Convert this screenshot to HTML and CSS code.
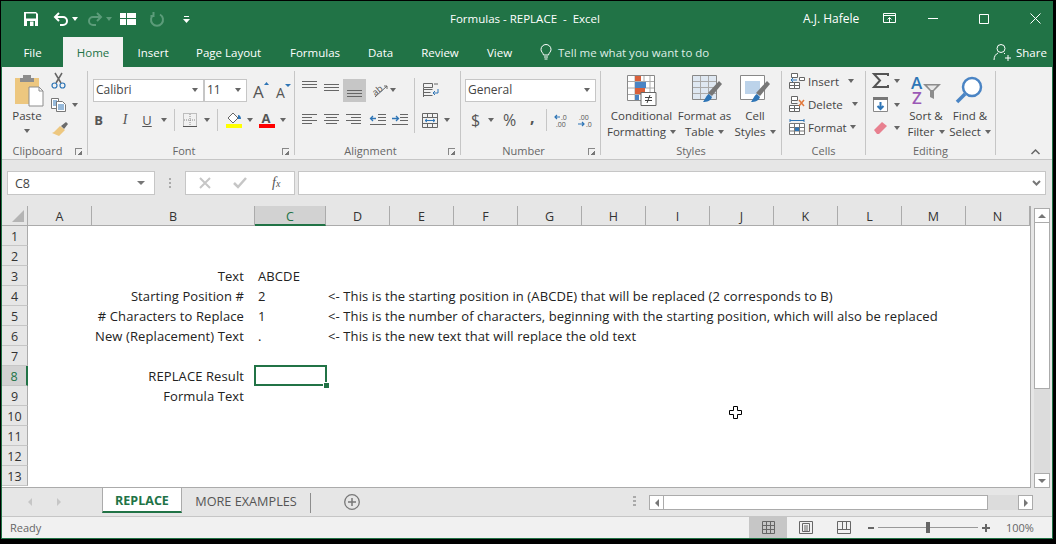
FILE: index.html
```html
<!DOCTYPE html>
<html lang="en">
<head>
    <meta charset="UTF-8">
    <title>Formulas - REPLACE - Excel</title>
    <link rel="stylesheet" href="styles.css">
</head>
<body>
<div class="window">

    <!-- title bar -->
    <div class="titlebar">
        <div class="qat">
            <svg width="14" height="14" viewBox="0 0 14 14"><path d="M0 0h12l2 2v12H0z" fill="#fff"/><path d="M2 1.500h10v5H2z" fill="#217346"/><path d="M3 9h8v5H3z" fill="#217346"/><path d="M6 9.500h3.500V14H6z" fill="#fff"/></svg>
            <svg class="undo" width="16" height="14" viewBox="0 0 16 14"><path d="M6 1L2 5l4 4M2 5h8a4 4 0 0 1 0 8H7" fill="none" stroke="#fff" stroke-width="2"/></svg>
            <span class="caret white undo-caret"></span>
            <svg class="redo" width="16" height="14" viewBox="0 0 16 14"><path d="M10 1l4 4-4 4M14 5H6a4 4 0 0 0 0 8h3" fill="none" stroke="#5c9c7a" stroke-width="2"/></svg>
            <span class="caret dim redo-caret"></span>
            <svg class="form" width="16" height="12" viewBox="0 0 16 12"><path d="M0 0h6v5H0zM7 0h9v5H7zM0 6h6v6H0zM7 6h9v6H7z" fill="#fff"/></svg>
            <svg class="refresh" width="14" height="14" viewBox="0 0 14 14"><path d="M4 2.500a6 6 0 1 0 6 0M3.500 0v4h-3" fill="none" stroke="#5c9c7a" stroke-width="2"/></svg>
            <svg class="custom" width="7" height="7" viewBox="0 0 7 7"><path d="M1 0h5v1H1zM0 3h7L3.500 7z" fill="#fff"/></svg>
        </div>
        <div class="doc-title">Formulas - REPLACE &nbsp;-&nbsp; Excel</div>
        <div class="user">A.J. Hafele</div>
        <div class="winbtns">
            <svg width="14" height="11" viewBox="0 0 14 11"><path d="M.5.500h12v9H.5zM1 2.500h11M6.500 9V4.500M4.500 6.500l2-2 2 2" fill="none" stroke="#fff"/></svg>
            <svg class="min" width="10" height="1" viewBox="0 0 10 1"><path d="M0 0h10v1H0z" fill="#fff"/></svg>
            <svg class="max" width="10" height="10" viewBox="0 0 10 10"><path d="M.5.500h9v9h-9z" fill="none" stroke="#fff"/></svg>
            <svg class="close" width="11" height="11" viewBox="0 0 11 11"><path d="M.5.500l10 10M10.500.500l-10 10" stroke="#fff" fill="none"/></svg>
        </div>
    </div>

    <!-- tabs -->
    <div class="tabs">
        <span class="tab file">File</span>
        <span class="tab active">Home</span>
        <span class="tab insert">Insert</span>
        <span class="tab layout">Page Layout</span>
        <span class="tab formulas">Formulas</span>
        <span class="tab data">Data</span>
        <span class="tab review">Review</span>
        <span class="tab view">View</span>
        <svg class="bulb" width="12" height="16" viewBox="0 0 12 16"><path d="M3.500 11C3 8.500 1 8 1 5.500a5 5 0 0 1 10 0C11 8 9 8.500 8.500 11zM4 13h4M4.500 15h3" fill="none" stroke="#fff"/></svg>
        <span class="tell">Tell me what you want to do</span>
        <svg class="share-icon" width="18" height="18" viewBox="0 0 18 18"><circle cx="8" cy="5.500" r="4" fill="none" stroke="#fff"/><path d="M1 17c0-4 2-6 4-7M11 10l1 1M12 15h6M15 12v6" fill="none" stroke="#fff"/></svg>
        <span class="share">Share</span>
    </div>

    <!-- ribbon -->
    <div class="ribbon">
        <section class="group g-clipboard">
            <div class="group-body">
                <div class="big paste-btn">
                    <svg width="29" height="32" viewBox="0 0 29 32"><path d="M0 3h24v26H0z" fill="#edc77f"/><path d="M8 0h8v3h3v4H5V3h3z" fill="#8d8d8d"/><path d="M14 12h10l4 4v15H14z" fill="#fff" stroke="#8d8d8d"/><path d="M24 12v4h4" fill="none" stroke="#8d8d8d"/></svg>
                    <span class="big-text">Paste</span>
                    <span class="caret"></span>
                </div>
                <div class="clip-tools">
                    <svg width="15" height="16" viewBox="0 0 15 16"><path d="M4 0l6 10M11 0L5 10" stroke="#666" stroke-width="1.500" fill="none"/><circle cx="3.500" cy="12.500" r="2.500" fill="none" stroke="#2e75b6" stroke-width="1.200"/><circle cx="11.500" cy="12.500" r="2.500" fill="none" stroke="#2e75b6" stroke-width="1.200"/></svg>
                    <div class="tool-row">
                        <svg width="16" height="14" viewBox="0 0 16 14"><path d="M.5.500h7v10h-7z" fill="#fff" stroke="#777"/><path d="M5.500 3.500h6l3 3v7h-9z" fill="#fff" stroke="#777"/><path d="M7 7h6M7 9h6M7 11h6M2 3h4M2 5h3M2 7h3" stroke="#2e75b6"/></svg>
                        <span class="caret copy-caret"></span>
                    </div>
                    <svg width="17" height="15" viewBox="0 0 17 15"><path d="M10 5l5-4 2 2-4 5z" fill="#6b6b6b"/><path d="M9 5l5 4-6 6-7-3 2-1z" fill="#edc77f"/></svg>
                </div>
            </div>
            <div class="group-label launched">Clipboard<span class="launcher"></span></div>
        </section>

        <section class="group g-font">
            <div class="group-body stack">
                <div class="row-top">
                    <div class="select font-name">Calibri<span class="caret"></span></div>
                    <div class="select font-size">11<span class="caret"></span></div>
                    <svg class="grow" width="17" height="17" viewBox="0 0 17 17"><path d="M11 3l2.500-3L16 3z" fill="#2e75b6"/><text x="0" y="16" class="glyph" font-size="17">A</text></svg>
                    <svg class="shrink" width="15" height="15" viewBox="0 0 15 15"><path d="M9 0h6l-3 3z" fill="#2e75b6"/><text x="0" y="14" class="glyph" font-size="14">A</text></svg>
                </div>
                <div class="row-bottom">
                    <span class="fmt b">B</span>
                    <span class="fmt i">I</span>
                    <span class="fmt u">U</span>
                    <span class="caret u-caret"></span>
                    <span class="vsep first"></span>
                    <svg class="borders" width="14" height="14" viewBox="0 0 14 14"><path d="M.5.500h13v13H.5zM7 1v12M1 7h12" fill="none" stroke="#888" stroke-dasharray="1 1"/><path d="M0 13.500h14" stroke="#555"/></svg>
                    <span class="caret border-caret"></span>
                    <span class="vsep second"></span>
                    <svg class="fill" width="16" height="16" viewBox="0 0 16 16"><path d="M2 6l5-5 5 5-5 5z" fill="#fff" stroke="#666"/><path d="M12 3c2 0 3 2 3 4h-3z" fill="#2e75b6"/><path d="M0 12h16v4H0z" fill="#ffff00"/></svg>
                    <span class="caret fill-caret"></span>
                    <svg class="color" width="16" height="16" viewBox="0 0 16 16"><text x="2.500" y="11" class="glyph" font-size="13" font-weight="700">A</text><path d="M0 12h16v4H0z" fill="#ff0000"/></svg>
                    <span class="caret color-caret"></span>
                </div>
            </div>
            <div class="group-label launched">Font<span class="launcher"></span></div>
        </section>

        <section class="group g-align">
            <div class="group-body stack">
                <div class="row-top">
                    <svg class="lines" width="15" height="11" viewBox="0 0 15 11"><path d="M0 .5h15M0 3.500h15M0 6.500h15" stroke="#666"/></svg>
                    <svg class="lines" width="15" height="11" viewBox="0 0 15 11"><path d="M0 3.500h15M0 6.500h15M0 9.500h15" stroke="#666"/></svg>
                    <span class="lines-on"><svg width="15" height="11" viewBox="0 0 15 11"><path d="M0 4.500h15M0 7.500h15M0 10.500h15" stroke="#666"/></svg></span>
                    <svg class="orient" width="16" height="16" viewBox="0 0 16 16"><text x="0" y="11" class="glyph" font-size="9" transform="rotate(-40 6 8)">ab</text><path d="M3 15L15 4M15 4h-3M15 4v3" fill="none" stroke="#666"/></svg>
                    <span class="caret orient-caret"></span>
                    <span class="vsep tall"></span>
                    <svg class="wrap" width="16" height="15" viewBox="0 0 16 15"><path d="M.5.500h9v4h-9zM.5 6.500h9M.5 9.500h7M.5 12.500h9M.5 5v9M11 1h4" fill="none" stroke="#666"/><path d="M15 6v4h-5M12 8l-2 2 2 2" fill="none" stroke="#2e75b6"/></svg>
                </div>
                <div class="row-bottom">
                    <svg class="al" width="15" height="12" viewBox="0 0 15 12"><path d="M0 .5h15M0 3.500h10M0 6.500h15M0 9.500h10" stroke="#666"/></svg>
                    <svg class="al" width="15" height="12" viewBox="0 0 15 12"><path d="M0 .5h15M2 3.500h11M0 6.500h15M2 9.500h11" stroke="#666"/></svg>
                    <svg class="al" width="15" height="12" viewBox="0 0 15 12"><path d="M0 .5h15M5 3.500h10M0 6.500h15M5 9.500h10" stroke="#666"/></svg>
                    <svg class="indent" width="16" height="12" viewBox="0 0 16 12"><path d="M8 .5h8M8 3.500h8M8 6.500h8M0 10.500h16" stroke="#666"/><path d="M6 4.500H1M3 2L.5 4.500 3 7" fill="none" stroke="#2e75b6" stroke-width="1.300"/></svg>
                    <svg class="indent" width="16" height="12" viewBox="0 0 16 12"><path d="M8 .5h8M8 3.500h8M8 6.500h8M0 10.500h16" stroke="#666"/><path d="M0 4.500h6M4 2l2.500 2.500L4 7" fill="none" stroke="#2e75b6" stroke-width="1.300"/></svg>
                    <svg class="merge" width="16" height="15" viewBox="0 0 16 15"><path d="M.5.500h15v14H.5zM1 4.500h14M1 10.500h14M5.500 1v3M10.500 1v3M5.500 11v3M10.500 11v3" fill="none" stroke="#666"/><path d="M3 7.500h10M5 6L3 7.500 5 9M11 6l2 1.500L11 9" fill="none" stroke="#2e75b6"/></svg>
                    <span class="caret merge-caret"></span>
                </div>
            </div>
            <div class="group-label launched">Alignment<span class="launcher"></span></div>
        </section>

        <section class="group g-number">
            <div class="group-body stack">
                <div class="row-top">
                    <div class="select number-format">General<span class="caret"></span></div>
                </div>
                <div class="row-bottom">
                    <span class="num-sym dollar">$</span>
                    <span class="caret dollar-caret"></span>
                    <span class="num-sym percent">%</span>
                    <span class="num-sym comma">,</span>
                    <span class="vsep"></span>
                    <svg class="dec" width="15" height="13" viewBox="0 0 15 13"><text x="6" y="6" class="dec-text">.0</text><text x="1" y="13" class="dec-text">.00</text><path d="M5 3H0M2 1L0 3l2 2" fill="none" stroke="#2e75b6" stroke-width="1.200"/></svg>
                    <svg class="dec second" width="15" height="13" viewBox="0 0 15 13"><text x="2" y="6" class="dec-text">.00</text><text x="9" y="13" class="dec-text">.0</text><path d="M1 10h6M5 8l2 2-2 2" fill="none" stroke="#2e75b6" stroke-width="1.200"/></svg>
                </div>
            </div>
            <div class="group-label launched">Number<span class="launcher"></span></div>
        </section>

        <section class="group g-styles">
            <div class="group-body">
                <div class="big style-btn">
                    <svg width="30" height="31" viewBox="0 0 30 31"><path d="M.5.500h27v25H.5z" fill="#fff" stroke="#888"/><path d="M8 1v24M17 1v24M23 1v24M1 6.500h26M1 13h26M1 19.500h26" stroke="#aaa" fill="none"/><path d="M8 1h6v5H8zM8 13h10v6H8z" fill="#d9603b"/><path d="M8 7h11v6H8zM8 20h4v5H8z" fill="#4a84c4"/><path d="M14 17.500h15v13H14z" fill="#fff" stroke="#666"/><path d="M18 22.500h7M18 25.500h7M23 20l-3 8" stroke="#444" fill="none"/></svg>
                    <span class="big-text">Conditional</span>
                    <span class="big-text">Formatting<span class="caret inline"></span></span>
                </div>
                <div class="big style-btn">
                    <svg width="30" height="31" viewBox="0 0 30 31"><path d="M.5.500h24v24H.5z" fill="#dfe8f2" stroke="#888"/><path d="M1 6.500h23M1 12.500h23M1 18.500h23M8.500 1v23M16.500 1v23" stroke="#aaa" fill="none"/><path d="M27 6l3 3-10 12-4-3z" fill="#777"/><path d="M17 19l3 3c-1 4-5 5-9 5 2-2 3-7 6-8z" fill="#2e75b6"/></svg>
                    <span class="big-text">Format as</span>
                    <span class="big-text">Table<span class="caret inline"></span></span>
                </div>
                <div class="big style-btn">
                    <svg width="30" height="31" viewBox="0 0 30 31"><path d="M.5.500h24v24H.5z" fill="#fff" stroke="#888"/><path d="M5 6h15v13H5z" fill="#bcd3ea"/><path d="M27 6l3 3-10 12-4-3z" fill="#777"/><path d="M17 19l3 3c-1 4-5 5-9 5 2-2 3-7 6-8z" fill="#2e75b6"/></svg>
                    <span class="big-text">Cell</span>
                    <span class="big-text">Styles<span class="caret inline"></span></span>
                </div>
            </div>
            <div class="group-label">Styles</div>
        </section>

        <section class="group g-cells">
            <div class="group-body cell-list">
                <div class="cell-cmd">
                    <svg width="16" height="16" viewBox="0 0 16 16"><path d="M2.500.500h6v4h-6zM.5 9.500h5v6h-5zM5.500 9.500h5v6h-5zM.5 12.500h10M10.500 4.500h5v3h-5z" fill="#fff" stroke="#666"/><path d="M8 7H2M4 5L2 7l2 2" fill="none" stroke="#2e75b6"/></svg>
                    <span>Insert</span><span class="caret"></span>
                </div>
                <div class="cell-cmd">
                    <svg width="16" height="16" viewBox="0 0 16 16"><path d="M2.500.500h6v4h-6zM.5 9.500h5v6h-5zM5.500 9.500h5v6h-5zM.5 12.500h10M2.500 4.500v3h6" fill="#fff" stroke="#666"/><path d="M10 4l5 6M15 4l-5 6" stroke="#e2783a" stroke-width="1.500" fill="none"/></svg>
                    <span>Delete</span><span class="caret"></span>
                </div>
                <div class="cell-cmd">
                    <svg width="16" height="16" viewBox="0 0 16 16"><path d="M.5 4.500h15v11H.5zM5.500 5v10M10.500 5v10M1 8.500h14M1 12h14" fill="#fff" stroke="#777"/><path d="M6 8.500h4v3.500H6z" fill="#2e75b6"/><path d="M1 1.500h14M1 0v3M15 0v3" fill="none" stroke="#2e75b6"/></svg>
                    <span>Format</span><span class="caret tight"></span>
                </div>
            </div>
            <div class="group-label">Cells</div>
        </section>

        <section class="group g-editing">
            <div class="group-body">
                <div class="edit-tools">
                    <div class="tool-row">
                        <svg width="15" height="15" viewBox="0 0 15 15"><path d="M15 3V1H1l6 6.500L1 14h14v-2" fill="none" stroke="#555" stroke-width="2"/></svg>
                        <span class="caret"></span>
                    </div>
                    <div class="tool-row">
                        <svg width="15" height="15" viewBox="0 0 15 15"><path d="M.5 2.500h14v12H.5z" fill="#fff" stroke="#888"/><path d="M0 0h15v3H0z" fill="#777"/><path d="M7.500 5v7M4.500 9l3 3 3-3" fill="none" stroke="#2e75b6" stroke-width="2"/></svg>
                        <span class="caret"></span>
                    </div>
                    <div class="tool-row">
                        <svg width="15" height="14" viewBox="0 0 15 14"><path d="M1 9l8-8 5 4-8 8H4z" fill="#e8808f"/></svg>
                        <span class="caret"></span>
                    </div>
                </div>
                <div class="big sort-btn">
                    <svg width="32" height="28" viewBox="0 0 32 28"><text x="0" y="13" class="az a">A</text><text x="1" y="28" class="az z">Z</text><path d="M12 8h18l-7 7v8l-4-2v-6z" fill="#8d8d8d"/><path d="M16 9.500h10l-4 4.500h-2z" fill="#e8e8e8"/></svg>
                    <span class="big-text">Sort &amp;</span>
                    <span class="big-text">Filter<span class="caret inline"></span></span>
                </div>
                <div class="big find-btn">
                    <svg width="28" height="28" viewBox="0 0 28 28"><circle cx="17" cy="11" r="9" fill="#fff" stroke="#4a84c4" stroke-width="2.500"/><path d="M10 18L2 26" stroke="#4a84c4" stroke-width="3.500"/></svg>
                    <span class="big-text">Find &amp;</span>
                    <span class="big-text">Select<span class="caret inline"></span></span>
                </div>
            </div>
            <div class="group-label">Editing</div>
        </section>

        <section class="group g-end">
            <svg class="collapse" width="9" height="6" viewBox="0 0 9 6"><path d="M.5 5l4-4 4 4" fill="none" stroke="#666" stroke-width="1.500"/></svg>
        </section>
    </div>

    <!-- formula bar -->
    <div class="formula-bar">
        <div class="name-box">C8<span class="caret big-caret"></span></div>
        <div class="grip"></div>
        <div class="fx-box">
            <svg width="12" height="12" viewBox="0 0 12 12"><path d="M1 1l10 10M11 1L1 11" stroke="#c6c6c6" stroke-width="2"/></svg>
            <svg width="14" height="12" viewBox="0 0 14 12"><path d="M1 6l4 4 8-9" fill="none" stroke="#c6c6c6" stroke-width="2.500"/></svg>
            <span class="fx">f<small>x</small></span>
        </div>
        <div class="formula-input"><svg width="9" height="6" viewBox="0 0 9 6"><path d="M1 1l3.500 3.500L8 1" fill="none" stroke="#777" stroke-width="2"/></svg></div>
    </div>

    <!-- sheet -->
    <div class="sheet">
        <div class="grid">
            <div class="corner"><span class="tri"></span></div>
            <div class="col">A</div>
            <div class="col">B</div>
            <div class="col on">C</div>
            <div class="col">D</div>
            <div class="col">E</div>
            <div class="col">F</div>
            <div class="col">G</div>
            <div class="col">H</div>
            <div class="col">I</div>
            <div class="col">J</div>
            <div class="col">K</div>
            <div class="col">L</div>
            <div class="col">M</div>
            <div class="col">N</div>

            <div class="rh">1</div>
            <div class="rh">2</div>
            <div class="rh">3</div><div class="b">Text</div><div class="c">ABCDE</div>
            <div class="rh">4</div><div class="b">Starting Position #</div><div class="c">2</div><div class="d">&lt;- This is the starting position in (ABCDE) that will be replaced (2 corresponds to B)</div>
            <div class="rh">5</div><div class="b"># Characters to Replace</div><div class="c">1</div><div class="d">&lt;- This is the number of characters, beginning with the starting position, which will also be replaced</div>
            <div class="rh">6</div><div class="b">New (Replacement) Text</div><div class="c">.</div><div class="d">&lt;- This is the new text that will replace the old text</div>
            <div class="rh">7</div>
            <div class="rh on">8</div><div class="b">REPLACE Result</div><div class="c selected"></div>
            <div class="rh">9</div><div class="b">Formula Text</div>
            <div class="rh">10</div>
            <div class="rh">11</div>
            <div class="rh">12</div>
            <div class="rh">13</div>
        </div>
        <div class="vscroll">
            <div class="sbtn"><span class="tri-up"></span></div>
            <div class="vthumb"></div>
            <div class="vtrack"></div>
            <div class="sbtn"><span class="tri-down"></span></div>
        </div>
    </div>

    <!-- sheet tabs -->
    <div class="sheetbar">
        <div class="nav"><span class="nav-left"></span><span class="nav-right"></span></div>
        <div class="stab on">REPLACE</div>
        <div class="stab">MORE EXAMPLES</div>
        <svg class="add" width="16" height="16" viewBox="0 0 16 16"><circle cx="8" cy="8" r="7.300" fill="none" stroke="#777" stroke-width="1.300"/><path d="M8 4v8M4 8h8" stroke="#777" stroke-width="1.500"/></svg>
        <div class="dots"></div>
        <div class="hscroll">
            <div class="hbtn"><span class="tri-left"></span></div>
            <div class="hthumb"></div>
            <div class="htrack"></div>
            <div class="hbtn"><span class="tri-right"></span></div>
        </div>
    </div>

    <!-- status bar -->
    <div class="statusbar">
        <span class="ready">Ready</span>
        <div class="view-btn on"><svg width="13" height="13" viewBox="0 0 13 13"><path d="M.5.500h12v12H.5zM4.500 1v11M8.500 1v11M1 4.500h11M1 8.500h11" fill="none" stroke="#666"/></svg></div>
        <div class="view-btn"><svg width="14" height="13" viewBox="0 0 14 13"><path d="M.5.500h13v12H.5zM3.500 2.500h7v8h-7zM5 5h4M5 7h4M5 9h4" fill="none" stroke="#666"/></svg></div>
        <div class="view-btn"><svg width="14" height="13" viewBox="0 0 14 13"><path d="M.5.500h13v12H.5zM1 8.500h12M5.500 1v7M9.500 1v7" fill="none" stroke="#666"/></svg></div>
        <div class="zoom">
            <span class="zoom-minus"></span>
            <div class="slider"><span class="knob"></span></div>
            <span class="zoom-plus"></span>
        </div>
        <span class="pct">100%</span>
    </div>

    <!-- mouse pointer over the sheet -->
    <svg class="pointer" width="13" height="13" viewBox="0 0 13 13"><path d="M4.500.500h4v4h4v4h-4v4h-4v-4h-4v-4h4z" fill="#fff" stroke="#000"/></svg>
</div>
</body>
</html>
```

FILE: styles.css
```css
* {
    box-sizing: border-box;
}

html, body {
    margin: 0;
    height: 100%;
    background: #000;
}

body {
    font-family: 'Open Sans', 'Noto Sans', sans-serif;
    font-size: 11.5px;
    color: #444;
    overflow: hidden;
}

svg {
    display: block;
    flex: none;
    overflow: visible;
}

.glyph {
    font-family: 'Open Sans', sans-serif;
    fill: #555;
}

.window {
    position: relative;
    width: 1052px;
    height: 538px;
    margin: 1px 0 0 1px;
    border: 1px solid #217346;
    border-top: 0;
    background: #f1f1f1;
    display: flex;
    flex-direction: column;
}

.caret {
    display: inline-block;
    flex: none;
    width: 0;
    height: 0;
    border-left: 3.5px solid transparent;
    border-right: 3.5px solid transparent;
    border-top: 4px solid #666;
}

.caret.white { border-top-color: #fff; }
.caret.dim { border-top-color: #5c9c7a; }
.caret.inline { margin-left: 4px; vertical-align: 2px; }

/* title bar */
.titlebar {
    flex: none;
    height: 36px;
    background: #217346;
    color: #fff;
    display: flex;
    align-items: center;
}

.qat {
    width: 448px;
    padding-left: 22px;
    display: flex;
    align-items: center;
}

.undo { margin-left: 15px; }
.undo-caret { margin-left: 3px; }
.redo { margin-left: 9px; }
.redo-caret { margin-left: 3px; }
.form { margin-left: 8px; }
.refresh { margin-left: 14px; }
.custom { margin-left: 19px; }

.doc-title {
    width: 353px;
    font-size: 11.5px;
    margin-top: -2px;
}

.user {
    width: 80px;
    font-size: 12px;
    margin-top: -2px;
}

.winbtns {
    display: flex;
    align-items: center;
    margin-top: -1px;
}

.winbtns .min { margin-left: 31px; }
.winbtns .max { margin-left: 41px; }
.winbtns .close { margin-left: 41px; }

/* tabs */
.tabs {
    flex: none;
    height: 30px;
    background: #217346;
    color: #fff;
    display: flex;
    align-items: center;
    font-size: 11.5px;
}

.tab {
    height: 30px;
    line-height: 31px;
    text-align: center;
    white-space: nowrap;
}

.tab.file { width: 61px; }
.tab.active { width: 60px; background: #f1f1f1; color: #217346; }
.tab.insert { width: 60px; }
.tab.layout { width: 65px; margin-left: 13px; }
.tab.formulas { width: 49px; margin-left: 29px; }
.tab.data { width: 24px; margin-left: 29px; }
.tab.review { width: 38px; margin-left: 29px; }
.tab.view { width: 25px; margin-left: 28px; }

.bulb { margin-left: 28px; }
.tell { margin-left: 6px; width: 435px; color: #dfeee6; }
.share { margin-left: 5px; }

/* ribbon */
.ribbon {
    flex: none;
    height: 93px;
    background: #f1f1f1;
    border-bottom: 1px solid #c6c6c6;
    display: flex;
    padding-top: 4px;
}

.group {
    flex: none;
    height: 84px;
    border-right: 1px solid #c6c6c6;
    display: flex;
    flex-direction: column;
}

.group-body {
    flex: 1;
    display: flex;
    min-height: 0;
}

.group-label {
    flex: none;
    height: 17px;
    margin-bottom: -4px;
    line-height: 17px;
    text-align: center;
    position: relative;
    font-size: 11px;
    color: #666;
}

.group-label.launched {
    padding-right: 14px;
}

.launcher {
    position: absolute;
    right: 5px;
    top: 6px;
    width: 7px;
    height: 7px;
    border-left: 1px solid #888;
    border-top: 1px solid #888;
    background: linear-gradient(135deg, transparent 60%, #777 60%);
}

.stack {
    flex-direction: column;
}

.row-top, .row-bottom {
    display: flex;
    align-items: center;
}

.row-top { height: 24px; margin-top: 7px; }
.row-bottom { height: 24px; margin-top: 6px; }

.g-clipboard { width: 86px; }
.g-font { width: 207px; }
.g-align { width: 166px; }
.g-number { width: 140px; }
.g-styles { width: 181px; }
.g-cells { width: 84px; }
.g-editing { width: 130px; }
.g-end { flex: 1; border-right: 0; position: relative; }

.big {
    display: flex;
    flex-direction: column;
    align-items: center;
}

.big-text {
    line-height: 16px;
    white-space: nowrap;
}

.paste-btn {
    width: 50px;
    padding-top: 4px;
}

.paste-btn svg { margin-bottom: 1px; margin-left: 4px; }
.paste-btn .caret { margin-top: 5px; }

.clip-tools {
    margin-left: -1px;
    display: flex;
    flex-direction: column;
    gap: 9px;
    padding-top: 2px;
}

.tool-row {
    display: flex;
    align-items: center;
}

.copy-caret { margin-left: 5px; }

.select {
    height: 23px;
    border: 1px solid #c6c6c6;
    background: #fff;
    padding: 0 5px 2px 2px;
    display: flex;
    align-items: center;
    justify-content: space-between;
    font-size: 12px;
}

.select .caret { margin-top: 2px; }

.font-name { width: 111px; margin-left: 5px; }
.font-size { width: 43px; }
.grow { margin-left: 6px; }
.shrink { margin-left: 6px; margin-top: 2px; }

.fmt {
    width: 22px;
    text-align: center;
    font-size: 14px;
    color: #555;
    font-family: 'Liberation Serif', serif;
}

.fmt.b { margin-left: 6px; width: 20px; font-family: 'Open Sans', sans-serif; font-weight: 700; font-size: 13px; }
.fmt.i { font-style: italic; }
.fmt.u { font-family: 'Open Sans', sans-serif; font-size: 13px; text-decoration: underline; }

.u-caret { margin-left: 3px; }

.vsep {
    flex: none;
    width: 1px;
    height: 22px;
    background: #c6c6c6;
}

.vsep.first { margin-left: 7px; }
.borders { margin-left: 8px; }
.border-caret { margin-left: 7px; }
.vsep.second { margin-left: 7px; }
.fill { margin-left: 8px; }
.fill-caret { margin-left: 5px; }
.color { margin-left: 6px; }
.color-caret { margin-left: 5px; }

.g-align .row-top { padding-left: 7px; }
.g-align .row-bottom { padding-left: 7px; }
.lines { margin-right: 7px; margin-top: -7px; }
.lines-on {
    display: flex;
    align-items: center;
    justify-content: center;
    width: 23px;
    height: 23px;
    margin-left: -3px;
    padding-top: 2px;
    background: #c6c6c6;
}

.orient { margin-left: 6px; }
.orient-caret { margin-left: 2px; }
.vsep.tall { height: 55px; margin-left: 18px; align-self: flex-start; }
.wrap { margin-left: 8px; }
.al { margin-right: 7px; }
.indent { margin-right: 6px; margin-left: 2px; }
.indent + .indent { margin-left: 0; }
.merge { margin-left: 8px; }
.merge-caret { margin-left: 6px; }

.g-number .row-top { padding-left: 4px; }
.number-format { width: 131px; }
.g-number .row-bottom { padding-left: 10px; }

.num-sym {
    font-size: 16px;
    color: #555;
}

.dollar { width: 12px; }
.dollar-caret { margin-left: 5px; }
.percent { margin-left: 9px; width: 18px; }
.comma { margin-left: 9px; width: 7px; font-weight: 700; margin-top: -6px; }
.g-number .vsep { margin-left: 9px; }
.dec { margin-left: 8px; }
.dec.second { margin-left: 7px; }

.dec-text {
    font-family: 'Open Sans', sans-serif;
    font-size: 7px;
    fill: #555;
}

.g-styles .group-body { padding: 4px 0 0 8px; gap: 0; }
.style-btn svg { margin-bottom: 2px; }
.style-btn:nth-child(1) { width: 65px; }
.style-btn:nth-child(2) { width: 61px; }
.style-btn:nth-child(2) svg { margin-left: 4px; }
.style-btn:nth-child(3) { width: 40px; }

.cell-list {
    flex-direction: column;
    padding: 2px 0 0 7px;
    gap: 7px;
}

.cell-cmd {
    height: 16px;
    display: flex;
    align-items: center;
}

.cell-cmd span:first-of-type { margin-left: 3px; }
.cell-cmd .caret { margin-left: 9px; }
.cell-cmd .caret.tight { margin-left: 3px; }

.edit-tools {
    padding: 2px 0 0 7px;
    width: 45px;
    display: flex;
    flex-direction: column;
    gap: 9px;
}

.edit-tools .caret { margin-left: 6px; }

.sort-btn { width: 42px; padding-top: 5px; margin-left: -6px; }
.sort-btn svg { margin-left: 2px; }
.find-btn { width: 44px; padding-top: 5px; margin-left: 1px; }
.find-btn svg { margin-left: -2px; }
.sort-btn svg, .find-btn svg { margin-bottom: 4px; }

.az {
    font-family: 'Open Sans', sans-serif;
    font-size: 17px;
    font-weight: 600;
}

.az.a { fill: #2e75b6; }
.az.z { fill: #9b59b6; }

.collapse {
    position: absolute;
    right: 12px;
    top: 78px;
}

/* formula bar */
.formula-bar {
    flex: none;
    height: 46px;
    background: #e6e6e6;
    padding: 11px 6px 0 5px;
    display: flex;
    align-items: flex-start;
}

.name-box {
    width: 148px;
    height: 24px;
    background: #fff;
    border: 1px solid #c6c6c6;
    padding: 0 9px 0 7px;
    display: flex;
    align-items: center;
    justify-content: space-between;
    font-size: 12.5px;
}

.big-caret {
    border-left-width: 4px;
    border-right-width: 4px;
    border-top-color: #777;
}

.grip {
    width: 2px;
    height: 10px;
    margin: 7px 14px 0 14px;
    background: repeating-linear-gradient(#aaa 0 2px, transparent 2px 4px);
}

.fx-box {
    width: 110px;
    height: 24px;
    background: #fff;
    border: 1px solid #c6c6c6;
    display: flex;
    align-items: center;
    padding-left: 13px;
    gap: 22px;
}

.fx {
    font-family: 'Liberation Serif', serif;
    font-style: italic;
    font-size: 14px;
    color: #555;
    margin-left: 3px;
}

.fx small { font-size: 10px; }

.formula-input {
    flex: 1;
    height: 24px;
    margin-left: 3px;
    background: #fff;
    border: 1px solid #c6c6c6;
    display: flex;
    align-items: center;
    justify-content: flex-end;
    padding-right: 4px;
}

/* sheet */
.sheet {
    flex: none;
    height: 282px;
    background: #e6e6e6;
    display: flex;
}

.grid {
    width: 1029px;
    height: 282px;
    background: #fff;
    border-right: 1px solid #ababab;
    border-bottom: 1px solid #ababab;
    display: grid;
    grid-template-columns: 26px 64px 163px 71px repeat(10, 64px) 64px;
    grid-auto-rows: 20px;
    font-family: 'Open Sans', sans-serif;
    color: #222;
    font-size: 13px;
    letter-spacing: 0.1px;
    line-height: 21px;
    overflow: hidden;
}

.corner, .col {
    background: #e6e6e6;
    border-bottom: 1px solid #ababab;
}

.corner {
    position: relative;
    border-right: 1px solid #ababab;
}

.tri {
    position: absolute;
    right: 3px;
    bottom: 3px;
    border-left: 12px solid transparent;
    border-bottom: 12px solid #b4b4b4;
}

.col {
    text-align: center;
    border-right: 1px solid #ababab;
    font-size: 12.5px;
    color: #333;
}

.col.on {
    background: #d2d2d2;
    color: #217346;
    border-bottom: 2px solid #217346;
}

.rh {
    grid-column: 1;
    background: #e6e6e6;
    border-right: 1px solid #ababab;
    border-bottom: 1px solid #c6c6c6;
    text-align: center;
    font-size: 12.5px;
    color: #333;
}

.rh.on {
    background: #d2d2d2;
    color: #217346;
    border-right: 2px solid #217346;
}

.b {
    grid-column: 3;
    text-align: right;
    padding-right: 11px;
    white-space: nowrap;
}

.c {
    grid-column: 4;
    padding-left: 3px;
}

.d {
    grid-column: 5;
    padding-left: 2px;
    white-space: nowrap;
}

.selected {
    position: relative;
    margin: -1px -1px 0 -1px;
    border: 2px solid #217346;
}

.selected::after {
    content: "";
    position: absolute;
    right: -4px;
    bottom: -4px;
    width: 5px;
    height: 5px;
    background: #217346;
    outline: 1px solid #fff;
}

.vscroll {
    margin: 2px 0 0 3px;
    width: 16px;
    display: flex;
    flex-direction: column;
}

.sbtn {
    flex: none;
    height: 15px;
    background: #fff;
    border: 1px solid #ababab;
    display: flex;
    align-items: center;
    justify-content: center;
}

.vthumb {
    flex: none;
    height: 166px;
    background: #fff;
    border: 1px solid #ababab;
    border-top: 0;
}

.vtrack {
    flex: 1;
    background: #dcdcdc;
}

.tri-up, .tri-down, .tri-left, .tri-right {
    width: 0;
    height: 0;
    border: 4px solid transparent;
}

.tri-up { border-bottom: 4px solid #777; border-top: 0; }
.tri-down { border-top: 4px solid #777; border-bottom: 0; }
.tri-left { border-right: 4px solid #777; border-left: 0; }
.tri-right { border-left: 4px solid #777; border-right: 0; }

/* sheet tabs */
.sheetbar {
    flex: none;
    height: 29px;
    background: #e6e6e6;
    border-bottom: 1px solid #c6c6c6;
    display: flex;
    align-items: flex-start;
}

.nav {
    width: 100px;
    height: 28px;
    padding-left: 26px;
    display: flex;
    align-items: center;
    gap: 25px;
}

.nav-left {
    border: 4px solid transparent;
    border-right: 4px solid #c6c6c6;
    border-left: 0;
}

.nav-right {
    border: 4px solid transparent;
    border-left: 4px solid #c6c6c6;
    border-right: 0;
}

.stab {
    text-align: center;
    font-size: 12.7px;
    color: #555;
    width: 129px;
    border-right: 1px solid #8d8d8d;
    margin-top: 5px;
    height: 20px;
    line-height: 17px;
}

.stab.on {
    width: 80px;
    height: 25px;
    margin-top: 0;
    line-height: 26px;
    font-size: 12.5px;
    background: #fff;
    color: #217346;
    font-weight: 700;
    border: 1px solid #ababab;
    border-top: 0;
    border-bottom: 2px solid #217346;
}

.add { margin: 6px 0 0 33px; }

.dots {
    width: 3px;
    height: 11px;
    margin: 8px 0 0 273px;
    background: repeating-linear-gradient(#aaa 0 2px, transparent 2px 4px);
}

.hscroll {
    display: flex;
    margin: 7px 0 0 13px;
    width: 384px;
    height: 15px;
}

.hbtn {
    flex: none;
    width: 15px;
    background: #fff;
    border: 1px solid #ababab;
    display: flex;
    align-items: center;
    justify-content: center;
}

.hthumb {
    flex: none;
    width: 324px;
    background: #fff;
    border: 1px solid #ababab;
    border-left: 0;
}

.htrack {
    flex: 1;
    background: #dcdcdc;
}

/* status bar */
.statusbar {
    flex: 1;
    display: flex;
    align-items: center;
    color: #666;
    font-size: 11px;
}

.ready {
    width: 747px;
    padding-left: 8px;
}

.view-btn {
    width: 38px;
    height: 100%;
    display: flex;
    align-items: center;
    justify-content: center;
}

.view-btn.on { background: #c6c6c6; }

.zoom {
    display: flex;
    align-items: center;
    margin-left: 5px;
}

.zoom-minus {
    width: 6px;
    height: 2px;
    background: #666;
}

.slider {
    position: relative;
    width: 100px;
    height: 1px;
    margin: 0 4px;
    background: #999;
}

.knob {
    position: absolute;
    left: 48px;
    top: -5px;
    width: 4px;
    height: 11px;
    background: #666;
}

.zoom-plus {
    width: 8px;
    height: 8px;
    background: linear-gradient(#666, #666) center / 8px 2px no-repeat,
                linear-gradient(#666, #666) center / 2px 8px no-repeat;
}

.pct {
    margin-left: 16px;
}

.pointer {
    position: absolute;
    left: 727px;
    top: 405px;
}
```
